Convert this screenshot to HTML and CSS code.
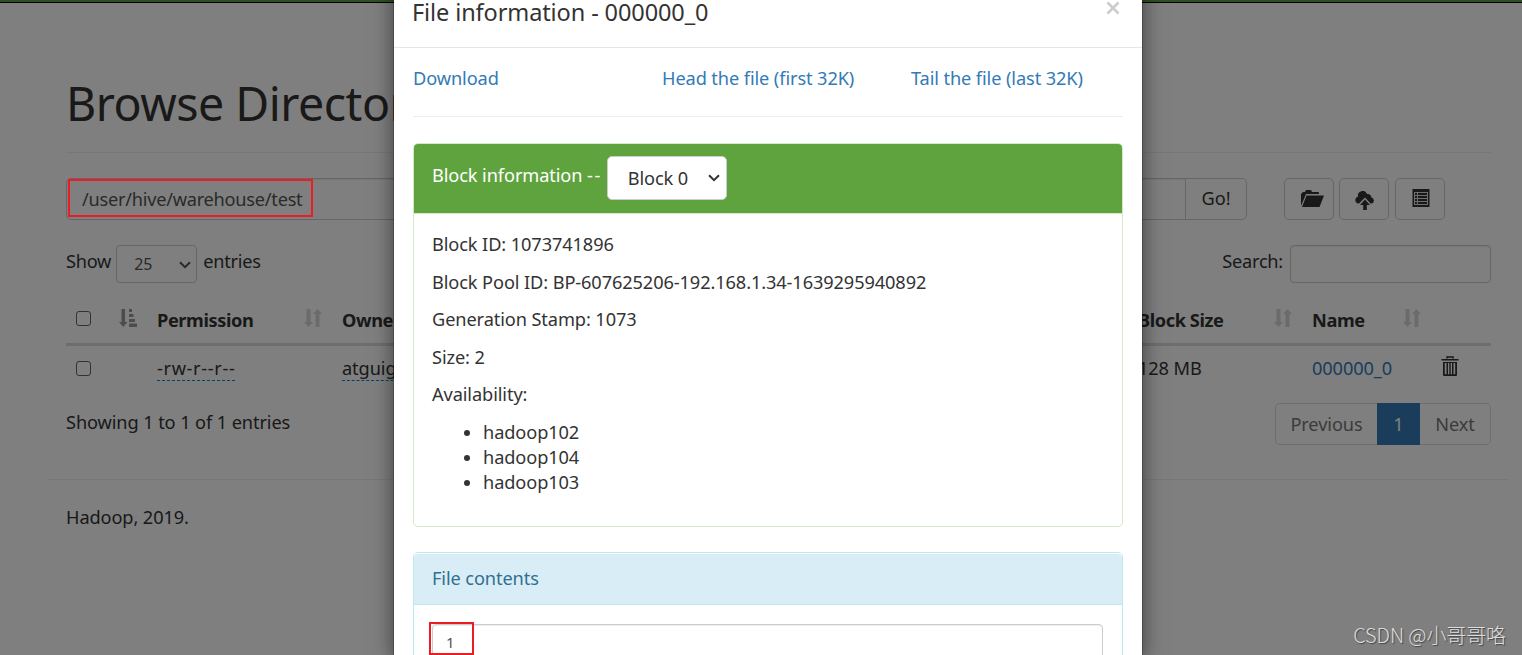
FILE: index.html
```html
<!DOCTYPE html>
<html lang="en">
<head>
  <meta charset="UTF-8">
  <meta name="viewport" content="width=device-width, initial-scale=1.0">
  <title>Browsing HDFS</title>
  <link rel="stylesheet" href="styles.css">
</head>
<body>
  <svg class="sprite" width="0" height="0">
    <symbol id="icon-chevron" viewBox="0 0 12 8">
      <path d="M1 1.2 L6 6.2 L11 1.2" fill="none" stroke="currentColor" stroke-width="2"/>
    </symbol>
    <symbol id="icon-sort" viewBox="0 0 18 18">
      <path d="M2.500 0h4v13h2.500l-4.500 5L0 13h2.500zM11.500 18h4V5h2.500l-4.500-5L9 5h2.500z" fill="currentColor"/>
    </symbol>
    <symbol id="icon-sort-asc" viewBox="0 0 18 18">
      <path d="M2.500 0h3.500v13h2.500l-4.200 5L0 13h2.500zM10 0h3v3h-3zM10 5h4.500v3H10zM10 10h6v3h-6zM10 14.500h8v3.500h-8z" fill="currentColor"/>
    </symbol>
  </svg>

  <div class="page">
    <div class="navbar"></div>
    <div class="container">
      <h1>Browse Directory</h1>

      <div class="toolbar">
        <div class="path-input"><span>/user/hive/warehouse/test</span></div>
        <button class="btn go">Go!</button>
        <button class="btn icon folder">
          <svg width="24" height="18" viewBox="0 0 24 18"><path d="M1 16V4l2-2h2l1-2h5l1 2h6q1 0 1 1v1H6L1 16zM6.500 5.500H24L19.500 17H2z" fill="currentColor"/></svg>
        </button>
        <button class="btn icon upload">
          <svg width="20" height="19" viewBox="0 0 20 19"><path d="M4 12.500H3.500A3.500 3.500 0 0 1 3 5.600 4.700 4.700 0 0 1 12 3a4.200 4.200 0 0 1 4.500 3.500 3.200 3.200 0 0 1 .5 6h-1.500L10 6.500z" fill="currentColor"/><path d="M10 8.500l5 5.500h-3.200v5H8.200v-5H5z" fill="currentColor"/></svg>
        </button>
        <button class="btn icon list">
          <svg width="18" height="18" viewBox="0 0 18 18"><path d="M.5 0h17v18H.5z" fill="currentColor"/><path d="M2 3h14v13H2z" fill="#ddd"/><path d="M3 4h2v2H3zM6 4h9v2H6zM3 7h2v2H3zM6 7h9v2H6zM3 10h2v2H3zM6 10h9v2H6zM3 13h2v2H3zM6 13h9v2H6z" fill="currentColor"/></svg>
        </button>
      </div>

      <div class="filters">
        <span>Show</span>
        <div class="select small"><span>25</span><svg width="12" height="8"><use href="#icon-chevron"/></svg></div>
        <span>entries</span>
        <span class="search-label">Search:</span>
        <input class="search" type="text">
      </div>

      <table>
        <colgroup>
          <col class="c-check"><col class="c-perm"><col class="c-owner"><col class="c-block"><col class="c-name"><col>
        </colgroup>
        <tr class="head">
          <th><div class="cell"><i class="checkbox"></i><svg class="sort active" width="18" height="18"><use href="#icon-sort-asc"/></svg></div></th>
          <th><div class="cell"><span>Permission</span><svg class="sort" width="18" height="18"><use href="#icon-sort"/></svg></div></th>
          <th><div class="cell"><span>Owner</span></div></th>
          <th><div class="cell"><span>Block Size</span><svg class="sort" width="18" height="18"><use href="#icon-sort"/></svg></div></th>
          <th><div class="cell"><span>Name</span><svg class="sort" width="18" height="18"><use href="#icon-sort"/></svg></div></th>
          <th></th>
        </tr>
        <tr class="row">
          <td><i class="checkbox"></i></td>
          <td><span class="editable perm">-rw-r--r--</span></td>
          <td><span class="editable">atguigu</span></td>
          <td>128 MB</td>
          <td><a href="#">000000_0</a></td>
          <td class="trash"><svg width="18" height="20" viewBox="0 0 18 20"><path d="M6 2.500V1h6v1.500" fill="none" stroke="currentColor" stroke-width="1.500"/><path d="M.5 3h17v1.600H.5zM2 6h14v13q0 1-1 1H3q-1 0-1-1zM3.800 7v11.200h1.700V7zM7 7v11.200h1.300V7zM9.700 7v11.200H11V7zM12.500 7v11.200h1.700V7z" fill="currentColor" fill-rule="evenodd"/></svg></td>
        </tr>
      </table>

      <div class="table-footer">
        <span class="info">Showing 1 to 1 of 1 entries</span>
        <div class="pagination">
          <span class="prev">Previous</span><span class="current">1</span><span class="next">Next</span>
        </div>
      </div>
    </div>
    <footer>Hadoop, 2019.</footer>
  </div>

  <div class="backdrop"></div>

  <div class="modal">
    <div class="modal-header">
      <h4>File information - 000000_0</h4>
      <svg class="close" width="14" height="14" viewBox="0 0 14 14"><path d="M1.500 1.500l11 11M12.500 1.500l-11 11" stroke="currentColor" stroke-width="2.500"/></svg>
    </div>
    <div class="modal-body">
      <div class="links">
        <a href="#">Download</a>
        <a href="#">Head the file (first 32K)</a>
        <a href="#">Tail the file (last 32K)</a>
      </div>
      <div class="panel success">
        <div class="panel-heading">
          <span>Block information <b class="dashes">--</b></span>
          <div class="select"><span>Block 0</span><svg width="12" height="8"><use href="#icon-chevron"/></svg></div>
        </div>
        <div class="panel-body">
          <p>Block ID: 1073741896</p>
          <p>Block Pool ID: BP-607625206-192.168.1.34-1639295940892</p>
          <p>Generation Stamp: 1073</p>
          <p>Size: 2</p>
          <p>Availability:</p>
          <ul>
            <li>hadoop102</li>
            <li>hadoop104</li>
            <li>hadoop103</li>
          </ul>
        </div>
      </div>
      <div class="panel info-panel">
        <div class="panel-heading"><span>File contents</span></div>
        <div class="panel-body"><div class="contents">1</div></div>
      </div>
    </div>
  </div>

  <div class="mark mark-path"></div>
  <div class="mark mark-contents"></div>
  <div class="watermark">CSDN @小哥哥咯</div>
</body>
</html>
```
FILE: styles.css
```css
* {
  box-sizing: border-box;
}

body {
  margin: 0;
  height: 655px;
  overflow: hidden;
  position: relative;
  background: #fff;
  color: #333;
  font-family: "Noto Sans", "Open Sans", sans-serif;
  font-size: 18.2px;
  letter-spacing: -0.1px;
  line-height: 25px;
  white-space: nowrap;
}

.sprite {
  position: absolute;
}

a {
  color: #337ab7;
  text-decoration: none;
}

.navbar {
  height: 3px;
  background: #5fa33e;
  border-bottom: 1px solid #000;
}

.container {
  width: 1425px;
  margin-left: 66px;
}

h1 {
  height: 150px;
  margin: 0 0 25px;
  padding-top: 70px;
  border-bottom: 1px solid #eee;
  font-size: 46.5px;
  font-weight: 400;
  letter-spacing: -0.5px;
  line-height: 60px;
}

/* path and buttons */
.toolbar {
  display: flex;
  height: 42px;
}

.path-input {
  width: 1120px;
  padding: 8px 15px;
  border: 1px solid #ccc;
  border-radius: 5px 0 0 5px;
  box-shadow: inset 0 1px 1px rgba(0, 0, 0, 0.075);
  color: #555;
  letter-spacing: -0.25px;
}

.btn {
  display: flex;
  align-items: center;
  justify-content: center;
  padding: 0;
  border: 1px solid #ccc;
  border-radius: 5px;
  background: #fff;
  color: #333;
  font: inherit;
}

.go {
  width: 62px;
  margin: 0 37px 0 -1px;
  padding-bottom: 2px;
  border-radius: 0 5px 5px 0;
}

.icon {
  width: 50px;
  margin-right: 5px;
}

.folder svg {
  margin-left: 5px;
}

.upload {
  margin-right: 6px;
}

.upload svg {
  margin: 2px 0 0 2px;
}

.list svg {
  margin: -2px 0 0 1px;
}

.filters {
  display: flex;
  height: 38px;
  margin-top: 25px;
}

.filters > span {
  padding-top: 4px;
  letter-spacing: -0.25px;
}

.select {
  display: flex;
  align-items: center;
  justify-content: space-between;
  width: 120px;
  height: 44px;
  padding: 0 6px 0 20px;
  border: 1px solid #ccc;
  border-radius: 5px;
  background: #fff;
  color: #333;
}

.select.small {
  width: 81px;
  height: 38px;
  margin: 0 6px 0 5px;
  padding: 1px 5px 0 17px;
  border-radius: 4px;
  color: #555;
  font-size: 16px;
}

.filters .search-label {
  margin-left: auto;
}

.search {
  width: 201px;
  margin-left: 7px;
  border: 1px solid #ccc;
  border-radius: 4px;
  box-shadow: inset 0 1px 1px rgba(0, 0, 0, 0.075);
}

/* listing */
table {
  width: 1425px;
  margin-top: 12px;
  table-layout: fixed;
  border-collapse: collapse;
}

.c-check { width: 91px; }
.c-perm { width: 185px; }
.c-owner { width: 796px; }
.c-block { width: 174px; }
.c-name { width: 129px; }

th, td {
  padding: 0;
  text-align: left;
}

th {
  letter-spacing: -0.4px;
}

.head {
  height: 49px;
  border-bottom: 3px solid #ddd;
}

.cell {
  display: flex;
  align-items: center;
  justify-content: space-between;
  padding: 3px 20px 0 0;
}

.cell .checkbox {
  margin-top: -4px;
}

.sort {
  margin-top: -4px;
  color: #d6d6d6;
}

.sort.active {
  color: #999;
}

.row {
  height: 47px;
}

.checkbox {
  display: block;
  width: 15px;
  height: 15px;
  margin-left: 10px;
  border: 1px solid #666;
  border-radius: 3px;
}

.editable {
  border-bottom: 1px dashed #08c;
}

.perm {
  letter-spacing: 0.65px;
}

.trash svg {
  display: block;
  margin-top: -5px;
}

.table-footer {
  display: flex;
  justify-content: space-between;
  height: 42px;
  margin-top: 12px;
}

.info {
  padding-top: 7px;
}

.pagination {
  display: flex;
  color: #777;
  line-height: 40px;
}

.pagination span {
  border: 1px solid #ddd;
  text-align: center;
}

.pagination .prev {
  width: 102px;
  border-right: 0;
  border-radius: 5px 0 0 5px;
}

.pagination .current {
  width: 43px;
  border-color: #337ab7;
  background: #337ab7;
  color: #fff;
}

.pagination .next {
  width: 71px;
  border-left: 0;
  border-radius: 0 5px 5px 0;
}

footer {
  width: 1461px;
  margin: 34px 0 0 47px;
  padding: 25px 19px;
  border-top: 1px solid #eee;
}

/* dialog */
.backdrop {
  position: absolute;
  inset: 0;
  background: rgba(0, 0, 0, 0.5);
}

.modal {
  position: absolute;
  top: -40px;
  bottom: 0;
  left: 393px;
  width: 750px;
  overflow: hidden;
  border: 1px solid rgba(0, 0, 0, 0.2);
  border-bottom: 0;
  background: #fff;
  background-clip: padding-box;
  box-shadow: 0 6px 19px rgba(0, 0, 0, 0.5);
}

.modal-header {
  display: flex;
  justify-content: space-between;
  height: 87px;
  padding: 35px 22px 0 18px;
  border-bottom: 1px solid #e5e5e5;
}

h4 {
  margin: 0;
  font-size: 23.5px;
  font-weight: 400;
  letter-spacing: -0.1px;
  line-height: 32px;
}

.close {
  margin-top: 5px;
  color: #ccc;
}

.modal-body {
  padding: 0 19px;
}

.links {
  display: grid;
  grid-template-columns: 249px 249px 1fr;
  height: 69px;
  padding-top: 18px;
  border-bottom: 1px solid #eee;
}

.panel {
  margin-top: 26px;
  border: 1px solid #d6e9c6;
  border-radius: 5px;
}

.panel-heading {
  display: flex;
  height: 70px;
  padding: 12px 18px;
  border-bottom: 1px solid #d6e9c6;
  border-radius: 4px 4px 0 0;
  background: #5fa33e;
  color: #fff;
}

.panel-heading > span {
  padding-top: 7px;
}

.dashes {
  font-weight: 400;
  letter-spacing: 1.5px;
}

.panel-heading .select {
  margin-left: 5px;
}

.success {
  height: 384px;
}

.panel-body {
  padding: 18px;
}

p {
  margin: 0 0 12.5px;
}

ul {
  margin: 0;
  padding-left: 51px;
}

.info-panel {
  height: 300px;
  margin-top: 25px;
  border-color: #bce8f1;
}

.info-panel .panel-heading {
  height: 52px;
  padding-top: 6px;
  border-color: #bce8f1;
  background: #d9edf7;
  box-shadow: inset 0 1px #fff;
  color: #31708f;
}

.info-panel .panel-body {
  padding: 19px 19px 0 18px;
}

.contents {
  height: 200px;
  padding: 5px 13px;
  border: 1px solid #ccc;
  border-radius: 4px;
  box-shadow: inset 0 1px 1px rgba(0, 0, 0, 0.075);
  color: #555;
  font-size: 15px;
}

/* red annotation boxes */
.mark {
  position: absolute;
  border: 2px solid #ed1c24;
}

.mark-path {
  top: 179px;
  left: 68px;
  width: 245px;
  height: 38px;
}

.mark-contents {
  top: 622px;
  left: 429px;
  width: 45px;
  height: 33px;
}

.watermark {
  position: absolute;
  right: 16px;
  bottom: 8px;
  color: #ddd;
  font-family: "Noto Sans CJK SC", sans-serif;
  font-size: 20px;
  font-weight: 300;
  letter-spacing: -0.1px;
  text-shadow: 1px 1px 1px #444;
}
```
